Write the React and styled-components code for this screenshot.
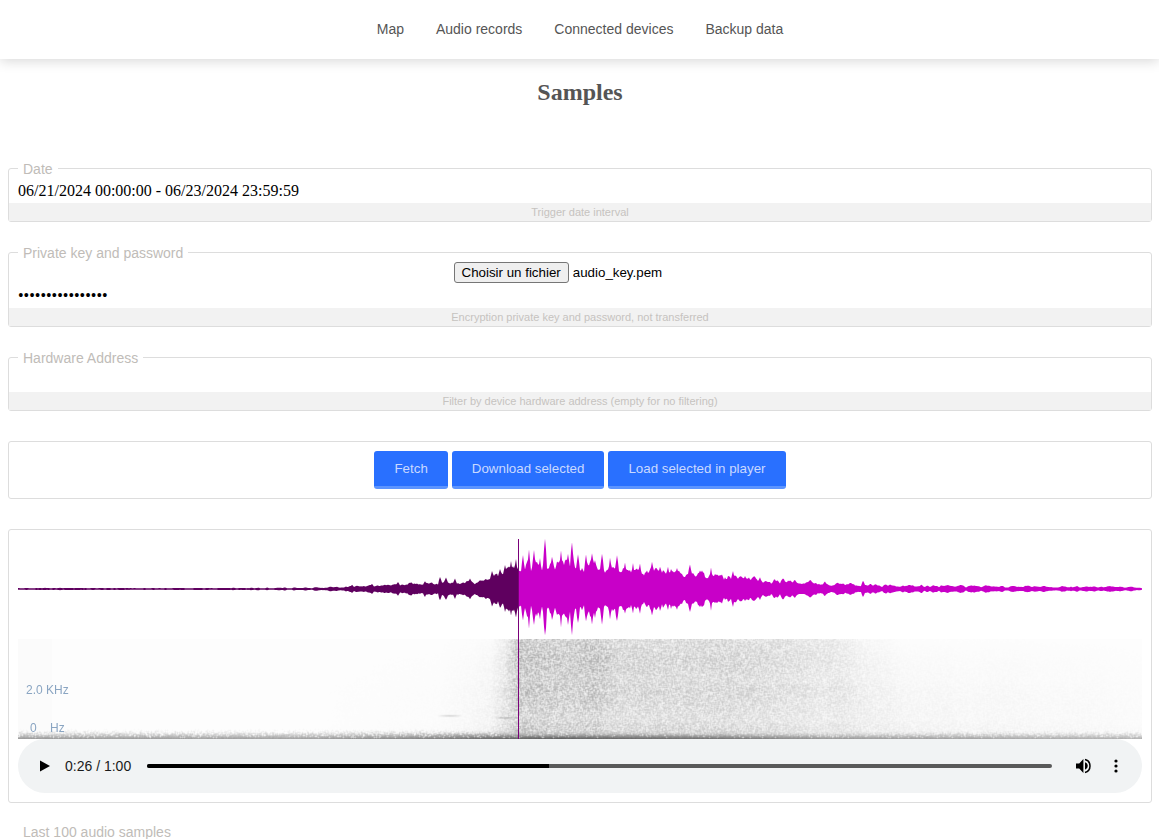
import React, { useEffect, useRef } from "react";
import styled, { createGlobalStyle } from "styled-components";

const Global = createGlobalStyle`
  html, body { margin: 0; padding: 0; height: 839px; overflow: hidden; background: #fff; }
  body { font-family: "Liberation Serif", serif; }
`;

const Nav = styled.nav`
  height: 59px;
  display: flex;
  justify-content: center;
  align-items: center;
  gap: 32px;
  padding: 0 0 1px 1px;
  box-sizing: border-box;
  background: #fff;
  box-shadow: 0 2px 12px rgba(0, 0, 0, 0.16);
  position: relative;
`;
const NavLink = styled.a`
  font: 14px "Liberation Sans", Arial, sans-serif;
  color: #555;
  text-decoration: none;
`;
const Title = styled.h1`
  margin: 20px 0 0;
  padding-left: 1px;
  height: 27px;
  font: bold 24px/27px "Liberation Serif", serif;
  color: #555;
  text-align: center;
`;
const Content = styled.main`
  padding: 0 7px 0 8px;
  margin-top: 54px;
  display: flex;
  flex-direction: column;
`;
const Field = styled.fieldset`
  margin: 0 0 22px;
  padding: 0;
  min-width: 0;
  border: 1px solid #ddd;
  border-radius: 3px;
  display: block;
`;
const Legend = styled.legend`
  margin-left: 9px;
  padding: 0 5px;
  font: 14px/16px "Liberation Sans", Arial, sans-serif;
  color: #c0bcb8;
  transform: translateY(1px);
`;
const TextInput = styled.input`
  display: block;
  box-sizing: border-box;
  width: 100%;
  height: ${(p) => p.$h || 27}px;
  padding: ${(p) => p.$top ?? 2}px 9px 0;
  border: 0;
  outline: 0;
  background: transparent;
  font: 16px "Liberation Serif", serif;
  color: #000;
`;
const Help = styled.div`
  height: 18px;
  background: #f2f2f2;
  font: 11px/18px "Liberation Sans", Arial, sans-serif;
  color: #c6c3c0;
  text-align: center;
`;
const FileRow = styled.div`
  display: flex;
  justify-content: center;
  align-items: center;
  height: 24px;
`;
const FileControl = styled.div`
  width: 253px;
  display: flex;
  align-items: center;
  gap: 4px;
  font: 13.33px "Liberation Sans", Arial, sans-serif;
  color: #000;
`;
const FileButton = styled.button`
  box-sizing: border-box;
  height: 21px;
  padding: 0 7px;
  background: #efefef;
  border: 1px solid #767676;
  border-radius: 3px;
  font: 13.33px "Liberation Sans", Arial, sans-serif;
  color: #000;
`;
const ActionCard = styled.section`
  border: 1px solid #ddd;
  border-radius: 3px;
  margin: 8px 0 30px;
  padding: 9px;
  display: flex;
  justify-content: center;
  gap: 4px;
  height: 38px;
`;
const ActionButton = styled.button`
  box-sizing: border-box;
  height: 38px;
  padding: 0 20px;
  background: #2970ff;
  border: 0;
  border-bottom: 3px solid #5c94ff;
  border-radius: 3px;
  font: 13.33px "Liberation Sans", Arial, sans-serif;
  color: #c9d9ff;
`;
const PlayerCard = styled.section`
  border: 1px solid #ddd;
  border-radius: 3px;
  padding: 9px;
  position: relative;
`;
const Wave = styled.svg`
  display: block;
  width: 1124px;
  height: 100px;
`;
const SpectrumBox = styled.div`
  position: relative;
  height: 100px;
`;
const SpectrumCanvas = styled.canvas`
  display: block;
  width: 1124px;
  height: 100px;
`;
const Freq = styled.span`
  position: absolute;
  left: ${(p) => p.$l}px;
  top: ${(p) => p.$t}px;
  font: 12px/14px "Liberation Sans", Arial, sans-serif;
  color: #8aa5c2;
  white-space: pre;
`;
const Cursor = styled.div`
  position: absolute;
  left: 509px;
  top: 9px;
  width: 1px;
  height: 200px;
  background: #7a007a;
`;
const AudioBar = styled.div`
  height: 54px;
  border-radius: 27px;
  background: #f1f3f4;
  display: flex;
  align-items: center;
  padding: 0 24px 0 20px;
  font: 14px "Liberation Sans", Arial, sans-serif;
  color: #1a1a1a;
`;
const TimeText = styled.span`
  margin-left: 13px;
  white-space: nowrap;
`;
const Track = styled.div`
  flex: 1;
  height: 4px;
  margin: 0 23px 0 16px;
  border-radius: 2px;
  background: #595959;
  overflow: hidden;
`;
const TrackFill = styled.div`
  height: 100%;
  width: 44.4%;
  background: #000;
`;
const Icon = styled.svg`
  display: block;
  flex: none;
`;
const MoreIcon = styled(Icon)`
  margin-left: 21px;
`;
const Last = styled.div`
  margin: 21px 0 0 23px;
  font: 14px/16px "Liberation Sans", Arial, sans-serif;
  color: #c0bcb8;
`;

function rng(seed) {
  let s = seed;
  return () => {
    s = (s * 1664525 + 1013904223) % 4294967296;
    return s / 4294967296;
  };
}
function lerp(points, x) {
  if (x <= points[0][0]) return points[0][1];
  for (let i = 1; i < points.length; i++) {
    if (x <= points[i][0]) {
      const [a, b] = points[i - 1];
      const [c, d] = points[i];
      return b + ((d - b) * (x - a)) / (c - a);
    }
  }
  return points[points.length - 1][1];
}
function valueNoise(seed, count) {
  const r = rng(seed);
  const values = Array.from({ length: count + 2 }, () => r());
  return (x) => {
    const i = Math.floor(x);
    const f = x - i;
    const u = f * f * (3 - 2 * f);
    return values[i] + (values[i + 1] - values[i]) * u;
  };
}

const ENVELOPE = [
  [18, 0.9], [250, 0.9], [300, 1.2], [340, 2.2], [380, 3.5], [420, 5],
  [445, 6], [480, 7], [490, 12], [505, 16], [518, 20], [530, 22], [560, 23],
  [600, 22], [640, 18], [680, 15], [720, 12], [760, 10], [790, 7], [830, 5],
  [880, 3.3], [1000, 2.3], [1135, 2], [1142, 1],
];
const PEAKS = [
  [352, 4], [372, 5], [398, 7], [425, 8], [440, 12], [446, 11], [455, 10], [470, 11],
  [492, 18], [500, 20], [505, 24], [511, 27], [516, 29],
  [523, 33], [529, 38], [534, 37], [540, 30], [545, 49], [552, 33], [561, 36], [568, 37],
  [572, 46], [578, 34], [586, 33], [592, 37], [602, 36], [610, 30], [617, 35], [625, 26],
  [633, 25], [640, 24], [652, 27], [660, 23], [668, 22], [677, 21], [690, 25], [700, 18],
  [711, 20], [722, 15], [733, 18], [745, 13], [760, 12], [790, 8], [810, 9], [863, 8],
];

function buildAmps() {
  const r = rng(77);
  const lump = valueNoise(5, 500);
  const fine = valueNoise(11, 1000);
  const amps = {};
  for (let x = 18; x <= 1142; x++) {
    const env = lerp(ENVELOPE, x);
    const l = lump(x / 3);
    const m = x > 760 ? 0.6 + 0.8 * l : x > 250 && x < 345 ? 0.4 + 1.1 * l : 0.8 + 0.4 * l;
    let a = Math.max(0.8, env * m * (0.85 + 0.3 * fine(x / 1.4)));
    for (const [px, pa] of PEAKS) {
      const d = (x - px) / 2;
      a = Math.max(a, pa * Math.exp(-d * d));
    }
    const n = a > 2 ? 1 + (r() - 0.4) * 0.12 : 1;
    amps[x] = [a * n, a * n * (0.92 + r() * 0.1)];
  }
  return amps;
}
const AMPS = buildAmps();
function wavePath(from, to) {
  const up = [];
  const down = [];
  for (let x = from; x <= to; x++) {
    const [a, b] = AMPS[x];
    up.push(`${x - 18},${(50 - a).toFixed(1)}`);
    down.unshift(`${x - 18},${(50 + b).toFixed(1)}`);
  }
  return `M${up.join("L")}L${down.join("L")}Z`;
}

const UPPER = [
  [18, 0], [440, 0], [490, 3], [505, 16], [518, 54], [600, 52], [660, 40], [740, 36],
  [820, 29], [860, 9], [900, 1], [1142, 0],
];
const LOWER = [
  [18, 0], [300, 0], [440, 3], [490, 13], [510, 38], [518, 50], [700, 38], [850, 22],
  [900, 12], [1000, 8], [1100, 5], [1142, 3],
];
const FLOOR = [
  [18, 150], [300, 160], [440, 125], [500, 100], [560, 95], [720, 115], [830, 150],
  [1000, 165], [1142, 175],
];

function paintSpectrum(canvas) {
  const ctx = canvas.getContext("2d");
  const w = canvas.width;
  const h = canvas.height;
  const r = rng(4242);
  const band = valueNoise(9, 60);
  const row = valueNoise(3, 12);
  const raw = new Float32Array(w * h);
  for (let y = 0; y < h; y++) {
    const up = (h - 10 - y) / (h - 10);
    const t = Math.max(0, Math.min(1, up));
    const rm = 0.85 + 0.3 * row(y / 10);
    for (let x = 0; x < w; x++) {
      const px = x + 18;
      const low = lerp(LOWER, px);
      const base = low + (lerp(UPPER, px) - low) * t;
      const I = base * rm * (0.85 + 0.3 * band(x / 25));
      let v = (px < 52 ? 251 : 253) - I * (0.1 + 1.4 * r());
      const fromBottom = h - y;
      if (fromBottom <= 10) {
        const q = (11 - fromBottom) / 10;
        const floor = lerp(FLOOR, px);
        const target = floor + (250 - floor) * (1 - q);
        if (r() < 0.45 + q * 0.55) v = Math.min(v, target + r() * 60 * (1.2 - q));
      }
      raw[y * w + x] = v;
    }
  }
  const smudge = (x0, x1, y0, amount) => {
    for (let x = x0; x < x1; x++) {
      const f = Math.sin((Math.PI * (x - x0)) / (x1 - x0));
      raw[y0 * w + x - 18] -= amount * f;
      raw[(y0 + 1) * w + x - 18] -= amount * f * 0.7;
    }
  };
  smudge(437, 462, 76, 35);
  smudge(493, 518, 78, 45);
  const img = ctx.createImageData(w, h);
  for (let y = 0; y < h; y++) {
    for (let x = 0; x < w; x++) {
      const l = raw[y * w + Math.max(0, x - 1)];
      const e = raw[y * w + Math.min(w - 1, x + 1)];
      const u = raw[Math.max(0, y - 1) * w + x];
      const d = raw[Math.min(h - 1, y + 1) * w + x];
      const v = (raw[y * w + x] * 3 + l + e + u + d) / 7;
      const i = (y * w + x) * 4;
      img.data[i] = img.data[i + 1] = img.data[i + 2] = v;
      img.data[i + 3] = 255;
    }
  }
  ctx.putImageData(img, 0, 0);
}

function Spectrum() {
  const ref = useRef(null);
  useEffect(() => {
    if (ref.current) paintSpectrum(ref.current);
  }, []);
  return <SpectrumCanvas ref={ref} width={1124} height={100} />;
}

const NAV = ["Map", "Audio records", "Connected devices", "Backup data"];
const ACTIONS = ["Fetch", "Download selected", "Load selected in player"];

export default function App() {
  return (
    <>
      <Global />
      <Nav>
        {NAV.map((n) => (
          <NavLink key={n} href="#">{n}</NavLink>
        ))}
      </Nav>
      <Title>Samples</Title>
      <Content>
        <Field>
          <Legend>Date</Legend>
          <TextInput readOnly value="06/21/2024 00:00:00 - 06/23/2024 23:59:59" />
          <Help>Trigger date interval</Help>
        </Field>
        <Field>
          <Legend>Private key and password</Legend>
          <FileRow>
            <FileControl>
              <FileButton type="button">Choisir un fichier</FileButton>
              <span>audio_key.pem</span>
            </FileControl>
          </FileRow>
          <TextInput type="password" readOnly value="aaaaaaaaaaaaaaaa" $h={24} $top={0} />
          <Help>Encryption private key and password, not transferred</Help>
        </Field>
        <Field>
          <Legend>Hardware Address</Legend>
          <TextInput readOnly value="" />
          <Help>Filter by device hardware address (empty for no filtering)</Help>
        </Field>
        <ActionCard>
          {ACTIONS.map((a) => (
            <ActionButton key={a} type="button">{a}</ActionButton>
          ))}
        </ActionCard>
        <PlayerCard>
          <Wave viewBox="0 0 1124 100">
            <defs>
              <filter id="soft" x="0" y="-10%" width="100%" height="120%">
                <feGaussianBlur stdDeviation="0.3 0.7" />
              </filter>
            </defs>
            <g filter="url(#soft)">
              <path d={wavePath(18, 518)} fill="#5f005f" />
              <path d={wavePath(518, 1142)} fill="#c800c8" />
            </g>
          </Wave>
          <SpectrumBox>
            <Spectrum />
            <Freq $l={8} $t={44}>2.0 KHz</Freq>
            <Freq $l={12} $t={82}>{"0    Hz"}</Freq>
          </SpectrumBox>
          <Cursor />
          <AudioBar>
            <Icon width="14" height="14" viewBox="0 0 14 14">
              <path d="M2 1.5 L12 7 L2 12.5 Z" fill="#000" />
            </Icon>
            <TimeText>0:26 / 1:00</TimeText>
            <Track><TrackFill /></Track>
            <Icon width="18" height="18" viewBox="0 0 18 18">
              <path d="M1 6.5v5h3.2L8.4 16V2L4.2 6.5H1z" fill="#000" />
              <path d="M10 5.2a4 4 0 0 1 0 7.6z" fill="#000" />
              <path d="M10 2.6a6.6 6.6 0 0 1 0 12.8" fill="none" stroke="#000" strokeWidth="1.5" />
            </Icon>
            <MoreIcon width="4" height="14" viewBox="0 0 4 14">
              <circle cx="2" cy="2" r="1.6" fill="#000" />
              <circle cx="2" cy="7" r="1.6" fill="#000" />
              <circle cx="2" cy="12" r="1.6" fill="#000" />
            </MoreIcon>
          </AudioBar>
        </PlayerCard>
      </Content>
      <Last>Last 100 audio samples</Last>
    </>
  );
}
